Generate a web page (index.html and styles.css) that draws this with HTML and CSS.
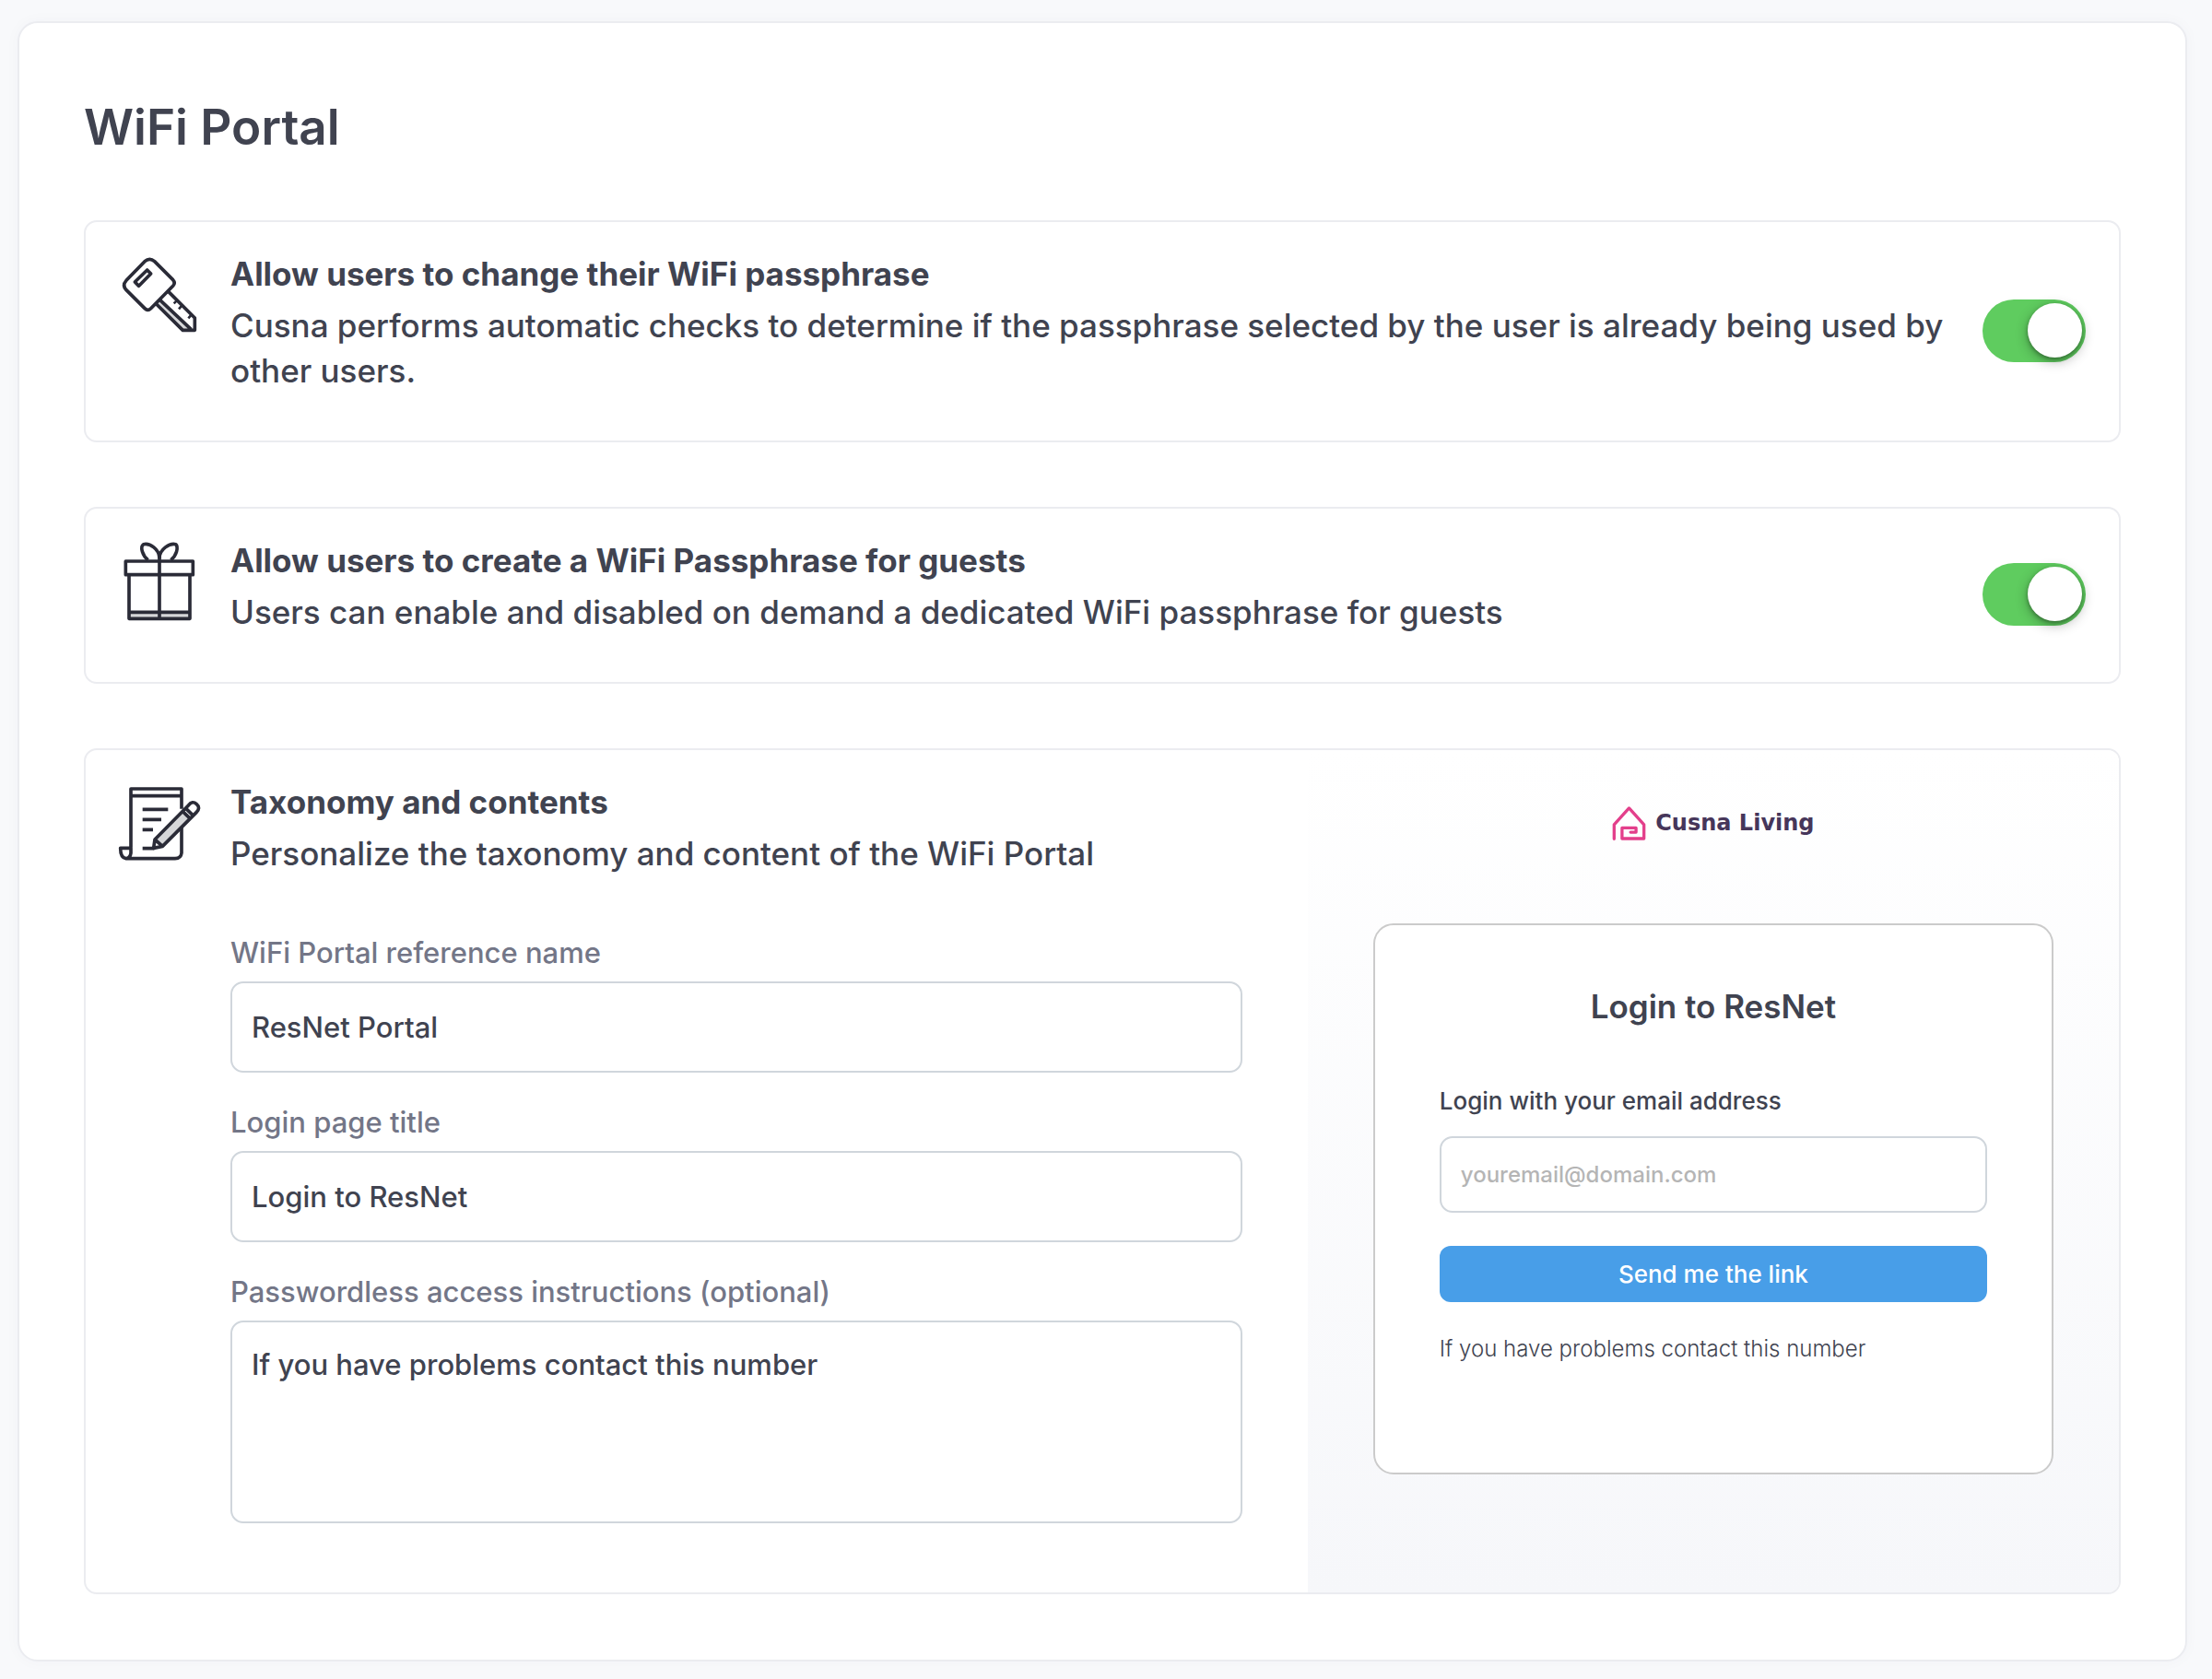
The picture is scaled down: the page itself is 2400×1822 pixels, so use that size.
FILE: index.html
```html
<!DOCTYPE html>
<html lang="en">
<head>
<meta charset="utf-8">
<meta name="viewport" content="width=device-width, initial-scale=1">
<title>WiFi Portal</title>
<link rel="stylesheet" href="styles.css">
</head>
<body>
<main class="panel">
  <h1 class="panel-title">WiFi Portal</h1>

  <section class="card card-toggle">
    <svg class="icon" viewBox="54 39 270 270" aria-hidden="true">
      <path class="shade" d="M190 198 L296 294 H266 L180 210 Z"/>
      <path d="M141 71 Q157 57 173 71 L233 131 Q242 141 233 151 L161 224 Q151 234 141 224 L81 164 Q67 149 81 133 Z"/>
      <path d="M149 99 L161 111 L122 151 L109 138 Z"/>
      <path d="M218 169 L304 255 V295 H265 L179 210 M191 197 L292 292"/>
      <path class="thin" d="M245 199 L236 208 M262 215 L252 226 M293 245 L283 256"/>
    </svg>
    <div class="copy">
      <h2 class="heading">Allow users to change their WiFi passphrase</h2>
      <p class="text" id="change-text">Cusna performs automatic checks to determine if the passphrase selected by the user is already being used by other users.</p>
    </div>
    <input class="switch" type="checkbox" role="switch" checked aria-label="Allow users to change their WiFi passphrase" aria-describedby="change-text">
  </section>

  <section class="card card-toggle">
    <svg class="icon" viewBox="54 42 270 270" aria-hidden="true">
      <path class="shade" d="M90 284 H288 V303 H90 Z"/>
      <path d="M79 117 H298 V161 H79 Z M90 161 V304 H288 V161 M90 283 H288 M189 92 V304"/>
      <path d="M152 113 C134 100 125 70 137 62 C158 57 188 78 189 106 C190 78 222 57 242 62 C252 72 244 100 226 113"/>
    </svg>
    <div class="copy">
      <h2 class="heading">Allow users to create a WiFi Passphrase for guests</h2>
      <p class="text" id="guest-text">Users can enable and disabled on demand a dedicated WiFi passphrase for guests</p>
    </div>
    <input class="switch" type="checkbox" role="switch" checked aria-label="Allow users to create a WiFi Passphrase for guests" aria-describedby="guest-text">
  </section>

  <section class="card card-split">
    <div class="editor">
      <svg class="icon" viewBox="54 33 270 270" aria-hidden="true">
        <path d="M96 254 V63 H261 V128 M261 188 V272 Q259 290 240 290 H80 Q62 288 62 256 H96 V272 Q94 288 80 290 M96 86 H261"/>
        <path d="M134 130 H217 M134 163 H195 M134 196 H168 M134 257 H172"/>
        <path class="shade" d="M176 226 L265 137 L290 161 L199 250 Z"/>
        <path d="M170 256 L174 228 L284 116 Q296 100 310 113 Q324 125 309 140 L199 250 Z M174 228 L199 250 M265 137 L290 161 M275 127 L300 151"/>
      </svg>
      <div class="copy">
        <h2 class="heading">Taxonomy and contents</h2>
        <p class="text">Personalize the taxonomy and content of the WiFi Portal</p>
        <form class="fields">
          <div class="field">
            <label for="ref-name">WiFi Portal reference name</label>
            <input class="control" id="ref-name" type="text" value="ResNet Portal">
          </div>
          <div class="field">
            <label for="page-title">Login page title</label>
            <input class="control" id="page-title" type="text" value="Login to ResNet">
          </div>
          <div class="field">
            <label for="instructions">Passwordless access instructions (optional)</label>
            <textarea class="control control-area" id="instructions">If you have problems contact this number</textarea>
          </div>
        </form>
      </div>
    </div>

    <div class="preview">
      <div class="brand">
        <svg class="brand-mark" viewBox="56 43 110 112" aria-hidden="true">
          <path d="M62 150 V103 L111 49 L160 103 V149 H88 V114 H134 V128 H116"/>
        </svg>
        <span>Cusna Living</span>
      </div>
      <form class="login">
        <h3 class="login-title">Login to ResNet</h3>
        <label class="login-label" for="email">Login with your email address</label>
        <input class="control login-input" id="email" type="email" placeholder="youremail@domain.com">
        <button class="login-button" type="button">Send me the link</button>
        <p class="login-note">If you have problems contact this number</p>
      </form>
    </div>
  </section>
</main>
</body>
</html>
```
FILE: styles.css
```css
* {
  box-sizing: border-box;
}

body {
  margin: 0;
  padding: 23px 27px 17px 19px;
  background: #f8f9fb;
  color: #404350;
  font-family: Inter, "Liberation Sans", sans-serif;
  font-size: 35px;
  line-height: 49px;
}

h1, h2, h3, p {
  margin: 0;
}

.panel {
  display: flex;
  flex-direction: column;
  gap: 70px;
  padding: 82px 70px 71px;
  border: 2px solid #ebecf0;
  border-radius: 22px;
  background: #fff;
  box-shadow: 0 0 16px rgba(60, 70, 100, 0.03);
}

.panel-title {
  font-size: 53px;
  font-weight: 600;
  line-height: 62px;
}

.card {
  border: 2px solid #ebecf0;
  border-radius: 14px;
  overflow: hidden;
}

.card-toggle {
  display: flex;
  align-items: center;
  gap: 32px;
  padding: 32px 36px 51px 35px;
}

.icon {
  flex: none;
  align-self: flex-start;
  width: 90px;
  height: 90px;
  fill: none;
  stroke: #2a2b37;
  stroke-width: 11;
  stroke-linejoin: round;
}

.icon .shade {
  fill: #d6d7d9;
  stroke: none;
}

.icon .thin {
  stroke-width: 8;
}

.copy {
  flex: 1;
  min-width: 0;
}

.heading {
  margin-bottom: 7px;
  font-size: 35px;
  font-weight: 700;
  line-height: 49px;
}

.text {
  font-weight: 500;
}

.switch {
  appearance: none;
  flex: none;
  display: flex;
  justify-content: flex-end;
  width: 112px;
  height: 68px;
  margin: 17px 0 0;
  padding: 4px;
  border-radius: 34px;
  background: #5fcc5f;
}

.switch::before {
  content: "";
  width: 59px;
  height: 59px;
  border-radius: 50%;
  background: #fff;
  box-shadow: 0 4px 14px rgba(0, 0, 0, 0.3), 0 2px 4px rgba(0, 0, 0, 0.3);
}

.switch:not(:checked) {
  justify-content: flex-start;
  background: #d5d7de;
}

.card-split {
  display: grid;
  grid-template-columns: 601fr 399fr;
}

.editor {
  display: flex;
  gap: 32px;
  padding: 32px 71px 75px 35px;
}

.fields {
  display: flex;
  flex-direction: column;
  gap: 32px;
  margin-top: 61px;
}

.field {
  display: flex;
  flex-direction: column;
  gap: 10px;
  color: #737687;
  font-size: 31px;
  font-weight: 500;
  line-height: 43px;
}

.control {
  width: 100%;
  height: 99px;
  padding: 0 21px;
  border: 2px solid #d0d6dc;
  border-radius: 14px;
  background: #fff;
  color: #404350;
  font-family: inherit;
  font-size: 31px;
  font-weight: 500;
}

.control-area {
  height: 220px;
  padding: 24px 21px;
  line-height: 43px;
  resize: none;
}

.preview {
  padding: 56px 71px;
  background: linear-gradient(#fff, #f6f7fa);
}

.brand {
  display: flex;
  align-items: center;
  justify-content: center;
  gap: 10px;
  height: 46px;
  color: #46365a;
  font-family: "DejaVu Sans", sans-serif;
  font-size: 24px;
  font-weight: 700;
}

.brand-mark {
  width: 37px;
  height: 37px;
  fill: none;
  stroke: #e33f8b;
  stroke-width: 10;
  stroke-linecap: round;
  stroke-linejoin: round;
}

.login {
  display: flex;
  flex-direction: column;
  margin-top: 86px;
  padding: 64px 70px 116px;
  border: 2px solid #cbcbcb;
  border-radius: 22px;
  background: #fff;
}

.login-title {
  font-size: 35px;
  font-weight: 600;
  line-height: 49px;
  text-align: center;
}

.login-label {
  margin-top: 60px;
  font-size: 26px;
  font-weight: 500;
  line-height: 36px;
}

.login-input {
  height: 83px;
  margin-top: 20px;
  font-size: 24px;
}

.login-input::placeholder {
  color: #b5b5b5;
  opacity: 1;
}

.login-button {
  height: 61px;
  margin-top: 36px;
  padding: 0;
  border: 0;
  border-radius: 12px;
  background: #489ee8;
  color: #fff;
  font-family: inherit;
  font-size: 26px;
  font-weight: 500;
}

.login-note {
  margin-top: 33px;
  font-size: 24px;
  font-weight: 300;
  line-height: 36px;
}
```
